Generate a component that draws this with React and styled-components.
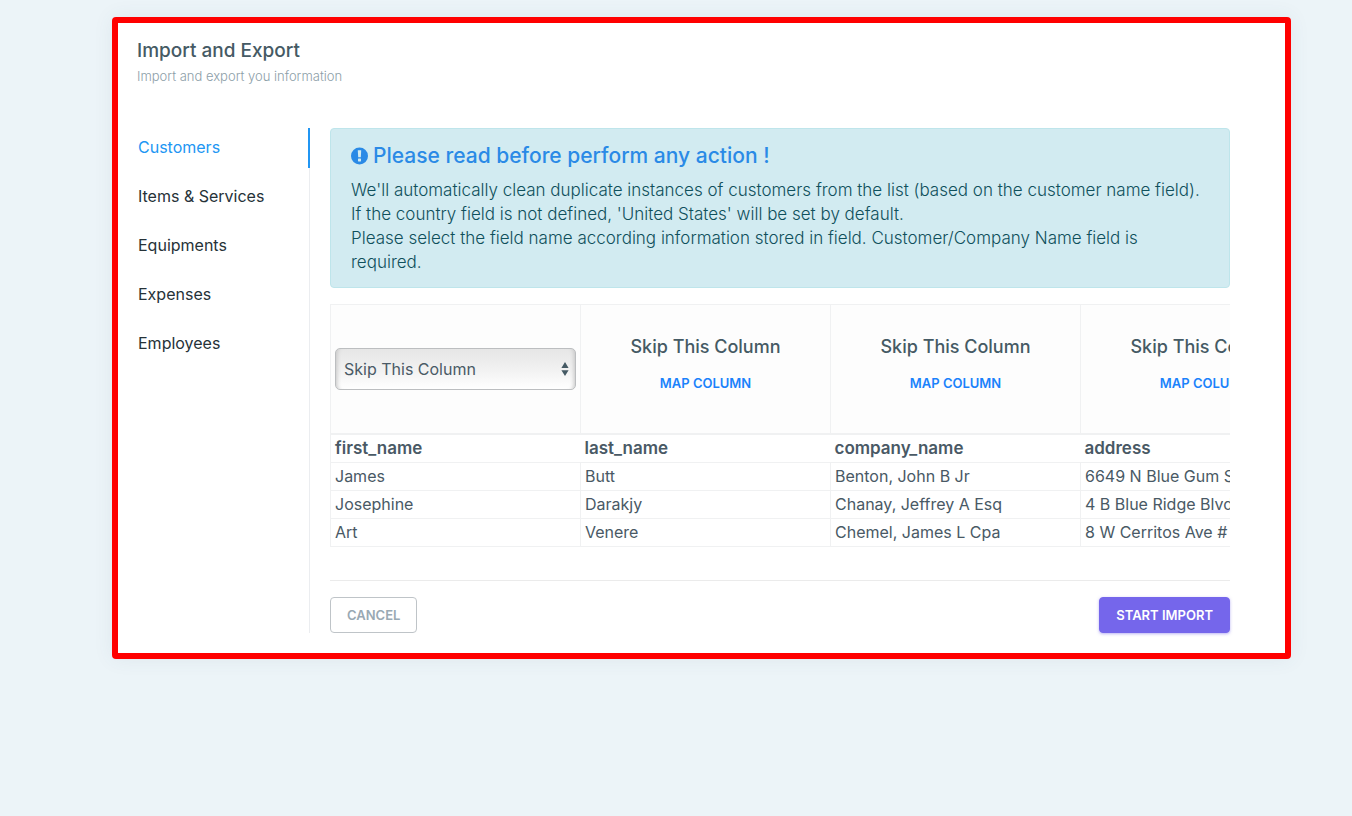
import { useState } from "react";
import styled, { createGlobalStyle } from "styled-components";

const GlobalStyle = createGlobalStyle`
  *, *::before, *::after {
    box-sizing: border-box;
  }
  body {
    margin: 0;
    background: #ecf4f8;
    color: #495965;
    font-family: Inter, "Noto Sans", sans-serif;
    font-size: 16px;
    line-height: 24px;
  }
  button, select {
    font-family: inherit;
  }
`;

const Page = styled.main`
  padding: 17px 61px 24px 112px;
`;

const Card = styled.section`
  background: #fff;
  border: 6px solid #ff0000;
  border-radius: 4px;
  box-shadow: 0 0 20px rgba(70, 90, 110, 0.08);
  padding-bottom: 20px;
`;

const CardHeader = styled.header`
  padding: 14px 19px 42px;
`;

const Title = styled.h1`
  margin: 0 0 2px;
  font-size: 19px;
  font-weight: 500;
  line-height: 27px;
  color: #455a64;
`;

const Subtitle = styled.p`
  margin: 0;
  font-size: 13px;
  font-weight: 300;
  line-height: 20px;
  color: #8c9ea8;
`;

const CardBody = styled.div`
  display: flex;
  padding-right: 55px;
`;

const SideNav = styled.nav`
  flex: 0 0 192px;
  display: flex;
  flex-direction: column;
  gap: 9px;
  border-right: 1px solid #ebedf0;
`;

const NavLink = styled.a`
  height: 40px;
  margin-right: -1px;
  padding: 7px 20px;
  border-right: 2px solid ${(props) => (props.$active ? "#2196f3" : "transparent")};
  color: ${(props) => (props.$active ? "#2196f3" : "#263238")};
  text-decoration: none;
`;

const Content = styled.div`
  flex: 1;
  min-width: 0;
  padding-left: 20px;
`;

const Alert = styled.div`
  margin-bottom: 16px;
  padding: 12px 20px 13px;
  border: 1px solid #bee5eb;
  border-radius: 4px;
  background: #d2ebf1;
  color: #0f505c;
`;

const AlertTitle = styled.h2`
  display: flex;
  align-items: center;
  gap: 5px;
  margin: 0 0 7px;
  font-size: 21px;
  font-weight: 500;
  line-height: 30px;
  color: #2a8ae6;
`;

const AlertText = styled.p`
  margin: 0;
  font-size: 17px;
  font-weight: 300;
`;

const TableWrap = styled.div`
  overflow-x: auto;
  scrollbar-width: none;
`;

const Table = styled.table`
  width: 1001px;
  table-layout: fixed;
  border-collapse: collapse;
  border: 1px solid #f0f1f2;
`;

const MapCell = styled.th`
  height: 129px;
  padding: 4px;
  border: 1px solid #f0f1f2;
  border-bottom-width: 2px;
  background: #fdfdfd;
  font-weight: 500;
  text-align: center;
  vertical-align: middle;
`;

const FieldCell = styled.th`
  height: 28px;
  padding: 2px 4px;
  font-size: 17px;
  font-weight: 600;
  line-height: 23px;
  text-align: left;
`;

const Cell = styled.td`
  height: 28px;
  padding: 2px 4px;
  border: 1px solid #f0f1f2;
  line-height: 23px;
  white-space: nowrap;
`;

const MapName = styled.div`
  margin-bottom: 12px;
  font-size: 18px;
  color: #455a64;
`;

const MapButton = styled.button`
  display: block;
  margin: 0 auto 8px;
  padding: 0;
  border: 0;
  background: none;
  color: #1a82fb;
  font-size: 13px;
  font-weight: 600;
  line-height: 24px;
  text-transform: uppercase;
  cursor: pointer;
`;

const SelectBox = styled.div`
  display: grid;
  align-items: center;

  > * {
    grid-area: 1 / 1;
  }
`;

const Select = styled.select`
  appearance: none;
  width: 100%;
  height: 42px;
  padding: 0 24px 0 8px;
  border: 1px solid #bcbec0;
  border-radius: 5px;
  background: linear-gradient(#e6e6e6, #f1f1f1 50%, #fff);
  box-shadow: inset 5px 0 4px -4px #c4c4c4, inset -5px 0 4px -4px #c4c4c4;
  color: #4a5a66;
  font-size: 16px;
`;

const Arrows = styled.svg`
  justify-self: end;
  margin-right: 7px;
  pointer-events: none;
`;

const Footer = styled.footer`
  display: flex;
  justify-content: space-between;
  margin-top: 33px;
  padding-top: 16px;
  border-top: 1px solid #ebebeb;
`;

const Button = styled.button`
  height: 36px;
  padding: 0 16px;
  border: 1px solid ${(props) => (props.$primary ? "#7566eb" : "#bfc4c8")};
  border-radius: 4px;
  background: ${(props) => (props.$primary ? "#7566eb" : "#fff")};
  box-shadow: ${(props) => (props.$primary ? "0 1px 3px rgba(117, 102, 235, 0.5)" : "none")};
  color: ${(props) => (props.$primary ? "#fff" : "#99a9b3")};
  font-size: 13px;
  font-weight: 600;
  text-transform: uppercase;
  cursor: pointer;
`;

const sections = ["Customers", "Items & Services", "Equipments", "Expenses", "Employees"];

const fields = ["first_name", "last_name", "company_name", "address"];

const rows = [
  ["James", "Butt", "Benton, John B Jr", "6649 N Blue Gum St"],
  ["Josephine", "Darakjy", "Chanay, Jeffrey A Esq", "4 B Blue Ridge Blvd"],
  ["Art", "Venere", "Chemel, James L Cpa", "8 W Cerritos Ave #"],
];

const AlertIcon = () => (
  <svg width="17" height="18" viewBox="0 0 17 18" aria-hidden="true">
    <circle cx="8.5" cy="9" r="8.5" fill="#2a8ae6" />
    <path d="M6.8 3.2h3.4L9.8 10.3H7.2z" fill="#d2ebf1" />
    <rect x="7" y="11.6" width="3" height="2.8" rx="0.4" fill="#d2ebf1" />
  </svg>
);

const App = () => {
  const [active, setActive] = useState("Customers");
  const [editing, setEditing] = useState(0);

  return (
    <>
      <GlobalStyle />
      <Page>
        <Card>
          <CardHeader>
            <Title>Import and Export</Title>
            <Subtitle>Import and export you information</Subtitle>
          </CardHeader>
          <CardBody>
            <SideNav>
              {sections.map((name) => (
                <NavLink
                  key={name}
                  href="#"
                  $active={name === active}
                  onClick={() => setActive(name)}
                >
                  {name}
                </NavLink>
              ))}
            </SideNav>
            <Content>
              <Alert>
                <AlertTitle>
                  <AlertIcon />
                  Please read before perform any action !
                </AlertTitle>
                <AlertText>
                  We'll automatically clean duplicate instances of customers from the list (based on the customer name field).
                </AlertText>
                <AlertText>
                  If the country field is not defined, 'United States' will be set by default.
                </AlertText>
                <AlertText>
                  Please select the field name according information stored in field. Customer/Company Name field is required.
                </AlertText>
              </Alert>
              <TableWrap>
                <Table>
                  <thead>
                    <tr>
                      {fields.map((field, index) => (
                        <MapCell key={field}>
                          {index === editing ? (
                            <SelectBox>
                              <Select aria-label={`Map ${field}`}>
                                <option>Skip This Column</option>
                                <option>Customer/Company Name</option>
                              </Select>
                              <Arrows width="8" height="14" viewBox="0 0 8 14" aria-hidden="true">
                                <path d="M4 0l3.6 6H.4zM4 14L.4 8.2h7.2z" fill="#455a64" />
                              </Arrows>
                            </SelectBox>
                          ) : (
                            <>
                              <MapName>Skip This Column</MapName>
                              <MapButton type="button" onClick={() => setEditing(index)}>
                                Map Column
                              </MapButton>
                            </>
                          )}
                        </MapCell>
                      ))}
                    </tr>
                    <tr>
                      {fields.map((field) => (
                        <FieldCell key={field}>{field}</FieldCell>
                      ))}
                    </tr>
                  </thead>
                  <tbody>
                    {rows.map((row) => (
                      <tr key={row[0]}>
                        {row.map((value) => (
                          <Cell key={value}>{value}</Cell>
                        ))}
                      </tr>
                    ))}
                  </tbody>
                </Table>
              </TableWrap>
              <Footer>
                <Button type="button">Cancel</Button>
                <Button type="button" $primary>Start Import</Button>
              </Footer>
            </Content>
          </CardBody>
        </Card>
      </Page>
    </>
  );
};

export default App;
